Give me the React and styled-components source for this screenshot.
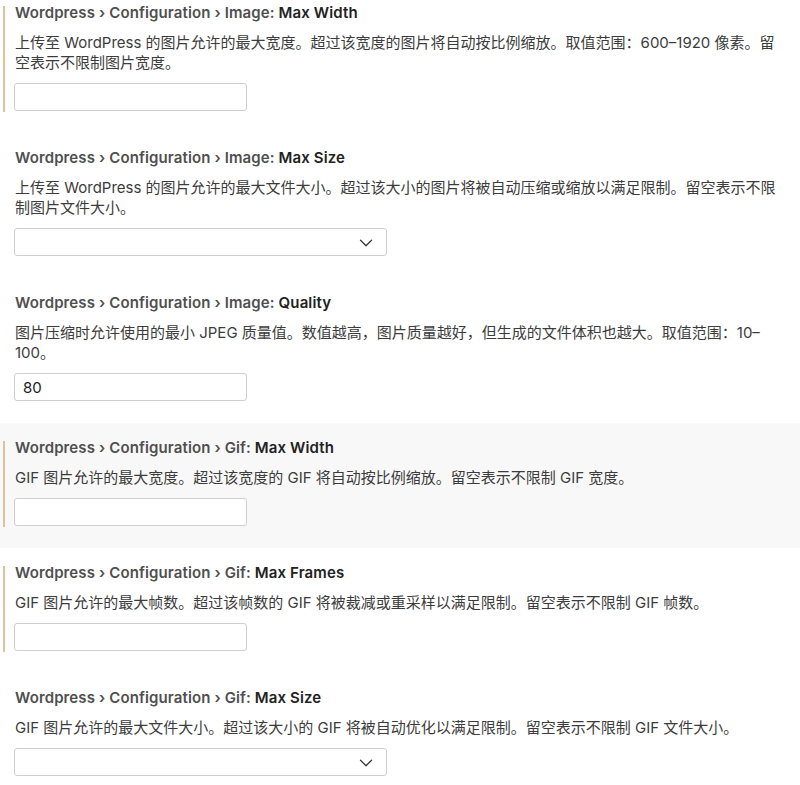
import styled, { createGlobalStyle } from "styled-components";
import { ChevronDown } from "lucide-react";

const settings = [
  {
    category: "Wordpress › Configuration › Image: ",
    label: "Max Width",
    desc: "上传至 WordPress 的图片允许的最大宽度。超过该宽度的图片将自动按比例缩放。取值范围：600–1920 像素。留空表示不限制图片宽度。",
    type: "input",
    modified: true,
  },
  {
    category: "Wordpress › Configuration › Image: ",
    label: "Max Size",
    desc: "上传至 WordPress 的图片允许的最大文件大小。超过该大小的图片将被自动压缩或缩放以满足限制。留空表示不限制图片文件大小。",
    type: "select",
  },
  {
    category: "Wordpress › Configuration › Image: ",
    label: "Quality",
    desc: "图片压缩时允许使用的最小 JPEG 质量值。数值越高，图片质量越好，但生成的文件体积也越大。取值范围：10–100。",
    type: "input",
    value: "80",
  },
  {
    category: "Wordpress › Configuration › Gif: ",
    label: "Max Width",
    desc: "GIF 图片允许的最大宽度。超过该宽度的 GIF 将自动按比例缩放。留空表示不限制 GIF 宽度。",
    type: "input",
    modified: true,
    focused: true,
  },
  {
    category: "Wordpress › Configuration › Gif: ",
    label: "Max Frames",
    desc: "GIF 图片允许的最大帧数。超过该帧数的 GIF 将被裁减或重采样以满足限制。留空表示不限制 GIF 帧数。",
    type: "input",
    modified: true,
  },
  {
    category: "Wordpress › Configuration › Gif: ",
    label: "Max Size",
    desc: "GIF 图片允许的最大文件大小。超过该大小的 GIF 将被自动优化以满足限制。留空表示不限制 GIF 文件大小。",
    type: "select",
  },
];

const GlobalStyle = createGlobalStyle`
  html, body {
    margin: 0;
    padding: 0;
    background: #ffffff;
    overflow: hidden;
  }
  body {
    font-family: Inter, "Noto Sans CJK SC", sans-serif;
    color: #444;
  }
`;

const List = styled.div`
  margin-top: -12px;
  width: 800px;
`;

const Row = styled.div`
  position: relative;
  padding: 15px 14px 22px 15px;
  background: ${(p) => (p.$focused ? "#f8f8f8" : "transparent")};
`;

const Indicator = styled.div`
  position: absolute;
  left: 3px;
  top: 18px;
  bottom: 21px;
  width: 2px;
  background: #dcc39b;
`;

const Title = styled.div`
  font-size: 15px;
  line-height: 20px;
  font-weight: 600;
  letter-spacing: 0.12px;
  color: #4f4f4f;
  white-space: nowrap;
`;

const Label = styled.span`
  color: #222;
`;

const Desc = styled.div`
  margin-top: 10px;
  font-size: 15px;
  line-height: 20px;
  color: #3c3c3c;
`;

const Field = styled.div`
  margin-top: 10px;
  margin-left: -1px;
  box-sizing: border-box;
  width: ${(p) => (p.$wide ? "373px" : "233px")};
  height: 28px;
  border: 1px solid #cfcfcf;
  border-radius: 3px;
  background: #fff;
  display: flex;
  align-items: center;
  justify-content: space-between;
  padding: 0 9px 0 8px;
  font-size: 15px;
  color: #222;
`;

const Chevron = styled(ChevronDown)`
  color: #3a3a3a;
  margin-top: 1px;
`;

function Setting({ s }) {
  return (
    <Row $focused={s.focused}>
      {s.modified && <Indicator />}
      <Title>
        {s.category}
        <Label>{s.label}</Label>
      </Title>
      <Desc lang="zh-CN">{s.desc}</Desc>
      {s.type === "select" ? (
        <Field $wide>
          <span />
          <Chevron size={22} strokeWidth={1.4} />
        </Field>
      ) : (
        <Field>{s.value}</Field>
      )}
    </Row>
  );
}

export default function App() {
  return (
    <>
      <GlobalStyle />
      <List>
        {settings.map((s, i) => (
          <Setting key={i} s={s} />
        ))}
      </List>
    </>
  );
}
